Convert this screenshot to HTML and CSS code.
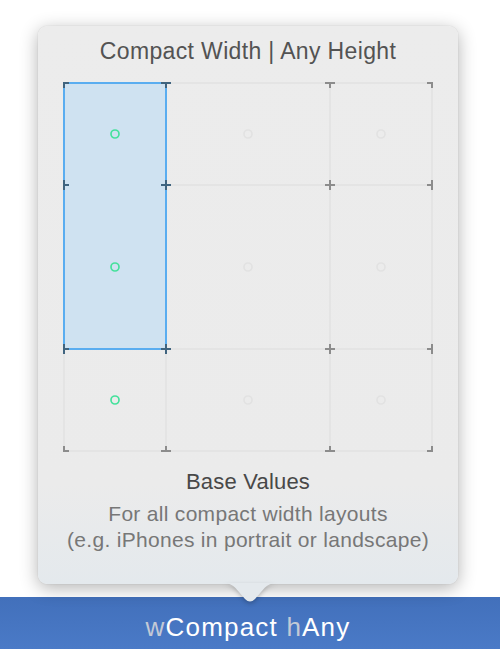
FILE: index.html
```html
<!DOCTYPE html>
<html>
<head>
<meta charset="utf-8">
<link rel="stylesheet" href="styles.css">
</head>
<body>
<div class="stage">
  <div class="popover">
    <div class="title">Compact Width | Any Height</div>
    <svg class="grid" width="372" height="372" viewBox="0 0 372 372">
      <g stroke="#e4e4e4" stroke-width="2" fill="none">
        <line x1="2" y1="2" x2="370" y2="2"/>
        <line x1="2" y1="104" x2="370" y2="104"/>
        <line x1="2" y1="268" x2="370" y2="268"/>
        <line x1="2" y1="370" x2="370" y2="370"/>
        <line x1="2" y1="2" x2="2" y2="370"/>
        <line x1="104" y1="2" x2="104" y2="370"/>
        <line x1="268" y1="2" x2="268" y2="370"/>
        <line x1="370" y1="2" x2="370" y2="370"/>
      </g>
      <rect x="2" y="2" width="102" height="266" fill="#cfe2f1" stroke="#5aadf0" stroke-width="2"/>
      <g stroke="#8c8c8c" stroke-width="2" stroke-linecap="square" fill="none">
        <path d="M268 2h-4M268 2h4M268 2v4"/>
        <path d="M370 2h-4M370 2v4"/>
        <path d="M268 104h-4M268 104h4M268 104v-4M268 104v4"/>
        <path d="M370 104h-4M370 104v-4M370 104v4"/>
        <path d="M268 268h-4M268 268h4M268 268v-4M268 268v4"/>
        <path d="M370 268h-4M370 268v-4M370 268v4"/>
        <path d="M2 370h4M2 370v-4"/>
        <path d="M104 370h-4M104 370h4M104 370v-4"/>
        <path d="M268 370h-4M268 370h4M268 370v-4"/>
        <path d="M370 370h-4M370 370v-4"/>
      </g>
      <g stroke="#40647f" stroke-width="2" stroke-linecap="square" fill="none">
        <path d="M2 2h4M2 2v4"/>
        <path d="M104 2h-4M104 2h4M104 2v4"/>
        <path d="M2 104h4M2 104v-4M2 104v4"/>
        <path d="M104 104h-4M104 104h4M104 104v-4M104 104v4"/>
        <path d="M2 268h4M2 268v-4M2 268v4"/>
        <path d="M104 268h-4M104 268h4M104 268v-4M104 268v4"/>
      </g>
      <g fill="none" stroke-width="1.7">
        <circle cx="53" cy="53" r="4" stroke="#45e19c"/>
        <circle cx="53" cy="186" r="4" stroke="#45e19c"/>
        <circle cx="53" cy="319" r="4" stroke="#45e19c"/>
        <circle cx="186" cy="53" r="4" stroke="#e2e2e2"/>
        <circle cx="186" cy="186" r="4" stroke="#e2e2e2"/>
        <circle cx="186" cy="319" r="4" stroke="#e2e2e2"/>
        <circle cx="319" cy="53" r="4" stroke="#e2e2e2"/>
        <circle cx="319" cy="186" r="4" stroke="#e2e2e2"/>
        <circle cx="319" cy="319" r="4" stroke="#e2e2e2"/>
      </g>
    </svg>
    <div class="heading">Base Values</div>
    <div class="desc">For all compact width layouts<br>(e.g. iPhones in portrait or landscape)</div>
    <svg class="arrow" width="56" height="21" viewBox="0 0 56 21">
      <path d="M0 0 C9 0 12 3 17 9 L23 16 Q28 21 33 16 L39 9 C44 3 47 0 56 0 Z" fill="#e4e9ed"/>
    </svg>
  </div>
  <div class="bar"><span class="dim">w</span>Compact <span class="dim">h</span>Any</div>
</div>
</body>
</html>
```
FILE: styles.css
```css
html, body {
  margin: 0;
  padding: 0;
  background: #ffffff;
}
.stage {
  width: 500px;
  height: 649px;
  padding-top: 26px;
  box-sizing: border-box;
  display: flex;
  flex-direction: column;
  overflow: hidden;
  font-family: "Liberation Sans", Arial, sans-serif;
}
.popover {
  position: relative;
  z-index: 2;
  margin-left: 38px;
  width: 420px;
  height: 558px;
  border-radius: 9px;
  background: linear-gradient(to bottom, #ececec 0%, #ebebeb 82%, #e4e9ed 100%);
  box-shadow: 0 4px 18px rgba(0, 0, 0, 0.3), 0 0 1px rgba(0, 0, 0, 0.25);
  display: flex;
  flex-direction: column;
  align-items: center;
}
.title {
  margin-top: 14px;
  height: 23px;
  font-size: 23px;
  line-height: 23px;
  letter-spacing: 0.35px;
  color: #535353;
  text-align: center;
}
.grid {
  display: block;
  margin-top: 18px;
  align-self: flex-start;
  margin-left: 24px;
}
.heading {
  margin-top: 18px;
  font-size: 22px;
  line-height: 22px;
  color: #484848;
  letter-spacing: 0.2px;
}
.desc {
  margin-top: 8px;
  font-size: 21px;
  line-height: 26px;
  letter-spacing: 0.3px;
  color: #777777;
  text-align: center;
}
.arrow {
  position: absolute;
  left: 184px;
  top: 557px;
  display: block;
  filter: drop-shadow(0 2px 2px rgba(0, 0, 0, 0.22));
}
.bar {
  position: relative;
  z-index: 1;
  margin-top: 13px;
  height: 52px;
  box-sizing: border-box;
  padding-top: 8px;
  padding-right: 4px;
  line-height: 44px;
  font-size: 26px;
  letter-spacing: 1.2px;
  color: #ffffff;
  text-align: center;
  background: linear-gradient(to bottom, #4270bb 0%, #4a7ac7 100%);
  white-space: nowrap;
}
.dim {
  color: #c3c9d6;
}
```
